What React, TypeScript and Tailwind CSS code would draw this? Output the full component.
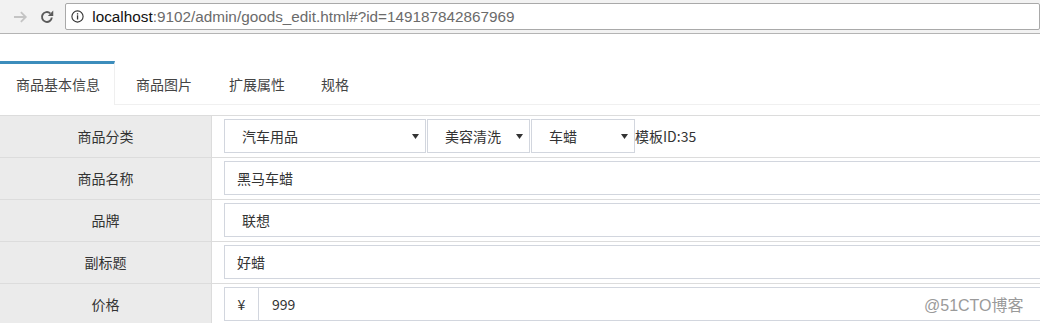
import React from "react";

const cjk = { fontFamily: '"Microsoft YaHei", "Noto Sans CJK SC", "Noto Sans", sans-serif' };

function Caret() {
  return (
    <svg width="7" height="5" viewBox="0 0 7 5" className="shrink-0">
      <polygon points="0,0 7,0 3.5,5" fill="#333" />
    </svg>
  );
}

function Select({ w, text }: { w: string; text: string }) {
  return (
    <div className={`${w} h-[34px] border border-[#d2d6de] flex items-center pl-[17px] pr-[6px] justify-between text-[14px] text-[#333]`}>
      <span>{text}</span>
      <Caret />
    </div>
  );
}

function Row({ label, children }: { label: string; children: React.ReactNode }) {
  return (
    <div className="flex h-[42px] border-t border-[#dcdcdc]">
      <div className="w-[212px] shrink-0 bg-[#ebebeb] border-r border-[#dcdcdc] flex items-center justify-center text-[14px] text-[#333]">
        {label}
      </div>
      <div className="flex-1 pl-[12px] pt-[3px] pb-[4px] flex items-start">{children}</div>
    </div>
  );
}

function Input({ value, pad = "pl-[12px]" }: { value: string; pad?: string }) {
  return (
    <div className={`w-[840px] h-[34px] border border-[#d2d6de] flex items-center ${pad} text-[14px] text-[#333]`}>
      {value}
    </div>
  );
}

export default function App() {
  return (
    <div className="w-[1040px] h-[323px] overflow-hidden bg-white relative" style={cjk}>
      {/* browser toolbar */}
      <div className="h-[34px] bg-[#f2f2f2] border-b border-[#b4b4b4] flex items-start">
        <div className="w-[13px]" />
        <svg width="15" height="14" viewBox="0 0 15 14" className="mt-[10px]">
          <path d="M1 7h12M8 2l5 5-5 5" fill="none" stroke="#c4c4c4" strokeWidth="1.8" />
        </svg>
        <svg width="16" height="16" viewBox="0 0 16 16" className="ml-[11px] mt-[9px]">
          <path d="M13 8.5a5 5 0 1 1-1.6-4.2" fill="none" stroke="#5a5a5a" strokeWidth="2" />
          <polygon points="14.5,1.5 14.5,7 9,7" fill="#5a5a5a" />
        </svg>
        <div className="ml-[11px] mt-[3px] h-[27px] w-[990px] bg-white border border-[#a9a9a9] rounded-[2px] flex items-center">
          <svg width="13" height="13" viewBox="0 0 13 13" className="ml-[5px]">
            <circle cx="6.5" cy="6.5" r="5.6" fill="none" stroke="#333" strokeWidth="1.1" />
            <rect x="5.9" y="5.3" width="1.3" height="4.2" fill="#333" />
            <rect x="5.9" y="3.2" width="1.3" height="1.3" fill="#333" />
          </svg>
          <span className="ml-[8px] text-[15.3px] leading-none" style={{ fontFamily: '"Liberation Sans", Arial, sans-serif' }}>
            <span className="text-[#111]">localhost</span>
            <span className="text-[#6b6b6b]">:9102/admin/goods_edit.html#?id=149187842867969</span>
          </span>
        </div>
      </div>

      {/* tabs */}
      <div className="mt-[27px] flex h-[44px] border-b border-[#f0f0f0] text-[14px] text-[#444]">
        <div className="w-[115px] border-t-[3px] border-[#3c8dbc] border-r border-r-[#efefef] bg-white flex items-center pl-[16px] -mb-px">
          商品基本信息
        </div>
        <div className="ml-[6px] border-t-[3px] border-transparent flex items-center px-[15px]">商品图片</div>
        <div className="ml-[7px] border-t-[3px] border-transparent flex items-center px-[15px]">扩展属性</div>
        <div className="ml-[6px] border-t-[3px] border-transparent flex items-center px-[15px]">规格</div>
      </div>

      {/* form */}
      <div className="mt-[10px]">
        <Row label="商品分类">
          <Select w="w-[202px]" text="汽车用品" />
          <div className="ml-[1px]">
            <Select w="w-[103px]" text="美容清洗" />
          </div>
          <div className="ml-[1px]">
            <Select w="w-[104px]" text="车蜡" />
          </div>
          <span className="h-[34px] flex items-center text-[14px] text-[#333]">模板ID:35</span>
        </Row>
        <Row label="商品名称">
          <Input value="黑马车蜡" />
        </Row>
        <Row label="品牌">
          <Input value="联想" pad="pl-[17px]" />
        </Row>
        <Row label="副标题">
          <Input value="好蜡" />
        </Row>
        <Row label="价格">
          <div className="flex h-[34px]">
            <div className="w-[35px] h-[34px] border border-[#d2d6de] flex items-center justify-center text-[14px] text-[#333]">¥</div>
            <div className="w-[800px] h-[34px] border border-l-0 border-[#d2d6de] flex items-center pl-[13px] text-[14px] text-[#333]">999</div>
          </div>
        </Row>
      </div>

      <div className="absolute left-[924px] top-[294px] text-[16px] text-[#9a9a9a]" style={{ fontFamily: '"Liberation Sans", "Noto Sans CJK SC", sans-serif' }}>
        @51CTO博客
      </div>
    </div>
  );
}
